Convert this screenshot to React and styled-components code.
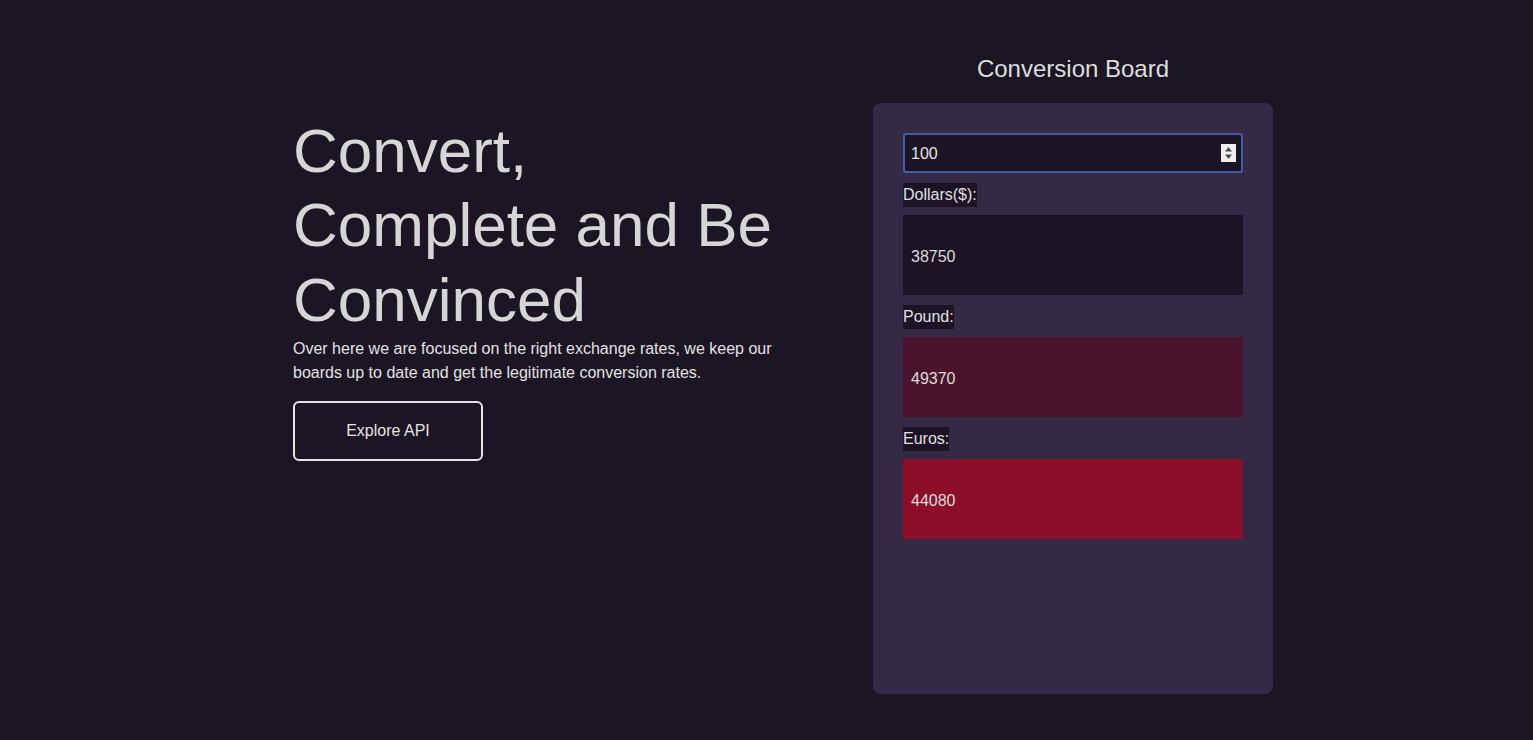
import React, { useState } from "react";
import styled, { createGlobalStyle } from "styled-components";

const Global = createGlobalStyle`
  html, body { margin: 0; padding: 0; }
  body {
    background: #1c1524;
    font-family: "Liberation Sans", Arial, sans-serif;
    color: #dcdcdc;
    min-height: 100vh;
  }
  * { box-sizing: border-box; }
`;

const Page = styled.main`
  display: flex;
  align-items: flex-start;
  gap: 80px;
  padding-left: 293px;
  min-height: 740px;
`;

const Hero = styled.section`
  width: 500px;
  padding-top: 114px;
  display: flex;
  flex-direction: column;
  align-items: flex-start;
`;

const Heading = styled.h1`
  margin: 0;
  font-size: 62px;
  line-height: 74.4px;
  font-weight: 400;
  color: #d6d6d6;
`;

const Lead = styled.p`
  margin: 0;
  font-size: 16px;
  line-height: 24px;
  color: #e2e2e2;
`;

const OutlineButton = styled.button`
  margin-top: 16px;
  width: 190px;
  height: 60px;
  background: transparent;
  border: 2px solid #e4e4e4;
  border-radius: 6px;
  color: #e4e4e4;
  font-family: inherit;
  font-size: 16px;
  cursor: pointer;
`;

const BoardColumn = styled.section`
  width: 400px;
  padding-top: 55px;
  display: flex;
  flex-direction: column;
`;

const BoardTitle = styled.h2`
  margin: 0 0 20px;
  font-size: 24px;
  line-height: 28px;
  font-weight: 400;
  text-align: center;
  color: #dedede;
`;

const Panel = styled.div`
  background: #342a46;
  border-radius: 8px;
  height: 591px;
  padding: 30px;
  display: flex;
  flex-direction: column;
`;

const InputWrap = styled.div`
  position: relative;
  height: 40px;
  margin-bottom: 10px;
`;

const AmountInput = styled.input`
  width: 100%;
  height: 40px;
  background: #1c1424;
  border: 2px solid #3f5ea8;
  border-radius: 3px;
  color: #e6e6e6;
  font-family: inherit;
  font-size: 16px;
  padding: 1px 30px 0 6px;
  outline: none;
  caret-color: #e6e6e6;
  -moz-appearance: textfield;
  &::-webkit-inner-spin-button,
  &::-webkit-outer-spin-button {
    -webkit-appearance: none;
    margin: 0;
  }
`;

const Spinner = styled.span`
  position: absolute;
  right: 7px;
  top: 11px;
  width: 15px;
  height: 18px;
  background: #efefef;
  display: flex;
  align-items: center;
  justify-content: center;
  pointer-events: none;
`;

const Label = styled.span`
  align-self: flex-start;
  background: #1c1424;
  font-size: 16px;
  line-height: 24px;
  color: #e0e0e0;
`;

const ValueBox = styled.div`
  margin: 8px 0 10px;
  height: 80px;
  background: ${(p) => p.$bg};
  display: flex;
  align-items: center;
  padding: 3px 0 0 8px;
  font-size: 16px;
  color: #dcdcdc;
`;

const rows = [
  { label: "Dollars($):", rate: 387.5, bg: "#1c1424" },
  { label: "Pound:", rate: 493.7, bg: "#4b142c" },
  { label: "Euros:", rate: 440.8, bg: "#8c0e29" },
];

export default function App() {
  const [amount, setAmount] = useState("100");
  const n = parseFloat(amount) || 0;
  return (
    <>
      <Global />
      <Page>
        <Hero>
          <Heading>Convert, Complete and Be Convinced</Heading>
          <Lead>
            Over here we are focused on the right exchange rates, we keep our
            boards up to date and get the legitimate conversion rates.
          </Lead>
          <OutlineButton>Explore API</OutlineButton>
        </Hero>
        <BoardColumn>
          <BoardTitle>Conversion Board</BoardTitle>
          <Panel>
            <InputWrap>
              <AmountInput
                type="number"
                value={amount}
                autoFocus
                onChange={(e) => setAmount(e.target.value)}
              />
              <Spinner>
                <svg width="9" height="14" viewBox="0 0 9 14">
                  <path d="M4.5 1 L8 5.5 L1 5.5 Z" fill="#4a4a4a" />
                  <path d="M4.5 13 L8 8.5 L1 8.5 Z" fill="#4a4a4a" />
                </svg>
              </Spinner>
            </InputWrap>
            {rows.map((r) => (
              <React.Fragment key={r.label}>
                <Label>{r.label}</Label>
                <ValueBox $bg={r.bg}>{Math.round(n * r.rate)}</ValueBox>
              </React.Fragment>
            ))}
          </Panel>
        </BoardColumn>
      </Page>
    </>
  );
}
